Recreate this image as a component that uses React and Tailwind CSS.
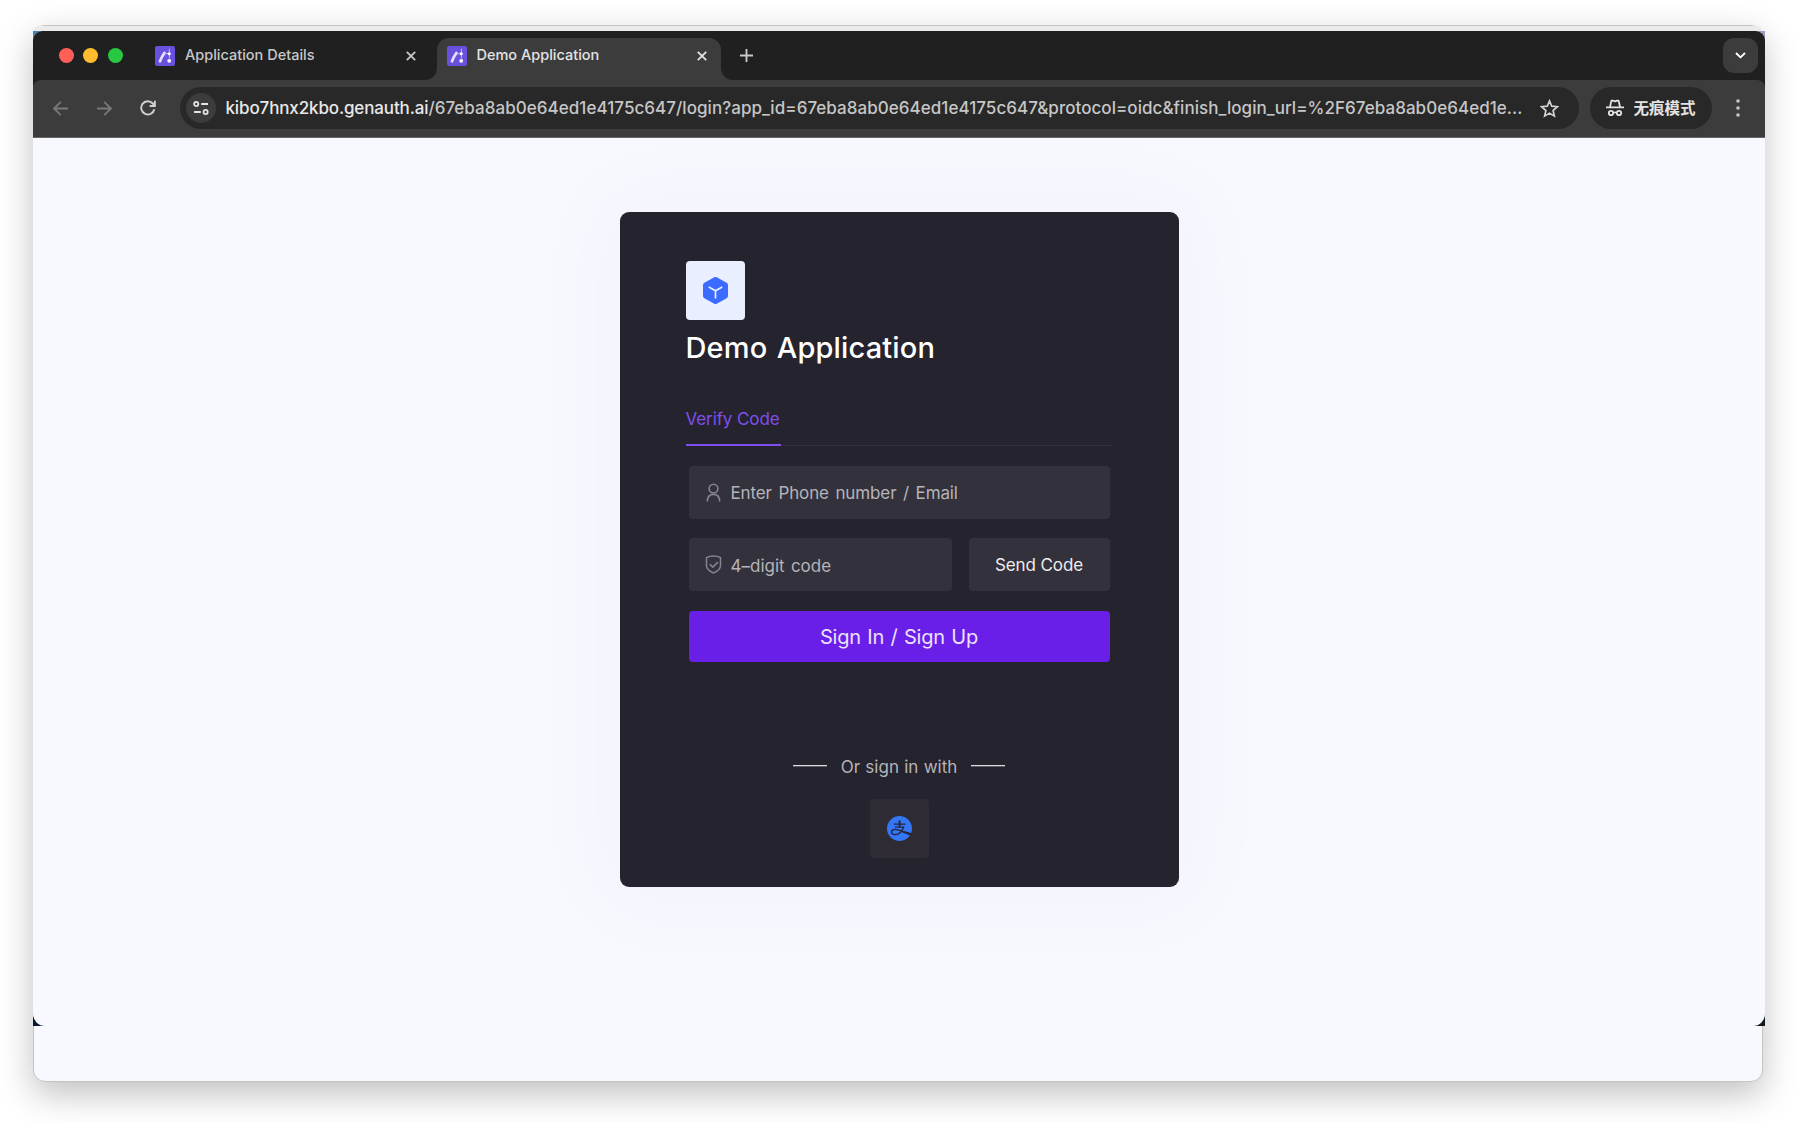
const line = { fill: "none", stroke: "currentColor", strokeLinecap: "round", strokeLinejoin: "round" };

function Favicon() {
  return (
    <svg className="size-5 shrink-0" viewBox="0 0 20 20">
      <rect width="20" height="20" rx="2" fill="#6a50dc" />
      <path d="M5 15.2Q6.5 11 9.4 7" stroke="#e6dfff" strokeWidth="2.8" strokeLinecap="round" fill="none" />
      <path d="M14.4 3v9M10.5 7.6h5" stroke="#b9abf5" strokeWidth="1.1" strokeLinecap="round" />
      <circle cx="14.2" cy="7.7" r="1.5" fill="#fff" />
      <circle cx="14.2" cy="14.8" r="1.9" fill="#fff" />
    </svg>
  );
}

function Close({ className }) {
  return (
    <svg className={className} viewBox="0 0 10 10" {...line} strokeWidth="1.8" strokeLinecap="butt">
      <path d="M.8.8l8.4 8.4M9.2.8.8 9.2" />
    </svg>
  );
}

function TabStrip() {
  return (
    <div className="flex h-[49px] bg-[#202020]">
      <div className="flex h-[49px] w-[121px] shrink-0 items-center gap-[9.5px] pl-[25.5px]">
        <span className="size-[15px] rounded-full bg-[#ff5f57]" />
        <span className="size-[15px] rounded-full bg-[#febc2e]" />
        <span className="size-[15px] rounded-full bg-[#28c840]" />
      </div>
      <div className="flex h-[49px] w-[283px] shrink-0 items-center pl-[1px] text-[#c8c8c8]">
        <Favicon />
        <span className="ml-[10px] -mt-px text-[14.5px] font-medium leading-5">Application Details</span>
        <Close className="ml-auto mr-[21px] size-[10px]" />
      </div>
      <div className="relative mt-[7px] flex h-[42px] w-[284px] shrink-0 items-center rounded-t-[12px] bg-[#3c3c3c] pb-[7px] pl-[9.5px] text-[#e3e3e3]">
        <svg className="absolute bottom-0 -left-[12px] size-3" viewBox="0 0 12 12"><path d="M12 0v12H0A12 12 0 0 0 12 0" fill="#3c3c3c" /></svg>
        <svg className="absolute bottom-0 -right-[12px] size-3" viewBox="0 0 12 12"><path d="M0 0v12h12A12 12 0 0 1 0 0" fill="#3c3c3c" /></svg>
        <Favicon />
        <span className="ml-[10px] -mt-px text-[14.5px] font-medium leading-5">Demo Application</span>
        <Close className="ml-auto mr-[14px] size-[10px]" />
      </div>
      <svg className="ml-[19px] mt-[18px] size-[13px] text-[#c8c8c8]" viewBox="0 0 13 13" {...line} strokeWidth="1.9" strokeLinecap="butt">
        <path d="M6.5 0v13M0 6.5h13" />
      </svg>
      <div className="ml-auto mr-[7px] mt-[7px] flex size-[35px] items-center justify-center rounded-[11px] bg-[#3c3c3c] text-white">
        <svg className="h-[7px] w-[11px]" viewBox="0 0 11 7" {...line} strokeWidth="1.9" strokeLinecap="butt">
          <path d="M1 1l4.5 4.4L10 1" />
        </svg>
      </div>
    </div>
  );
}

function Arrow({ className }) {
  return (
    <svg className={className} viewBox="0 0 15 15" {...line} strokeWidth="1.8" strokeLinecap="butt" strokeLinejoin="miter">
      <path d="M15 7.5H1.2M7.8.8 1.1 7.5l6.7 6.7" />
    </svg>
  );
}

function Toolbar() {
  return (
    <div className="bg-[#202020]">
      <div className="flex h-[58px] items-center rounded-t-[8px] border-b border-[#666] bg-[#3c3c3c] pb-[1px] pl-5">
        <Arrow className="size-[15px] shrink-0 text-[#787878]" />
        <Arrow className="ml-[29px] size-[15px] shrink-0 rotate-180 text-[#787878]" />
        <svg className="ml-[28px] size-4 shrink-0 text-[#d0d0d0]" viewBox="0 0 16 16" {...line} strokeWidth="1.9" strokeLinecap="butt" strokeLinejoin="miter">
          <path d="M14.3 9.2A6.6 6.6 0 1 1 12.8 3.5L14.6 5.6M14.9.8v5.2H9.6" />
        </svg>
        <div className="ml-[24px] flex h-[42px] w-[1398.5px] shrink-0 items-center rounded-full bg-[#282828] pl-[6px]">
          <div className="flex size-[30px] items-center justify-center rounded-full bg-[#3c3c3c] text-[#e3e3e3]">
            <svg className="h-[14px] w-4" viewBox="0 0 16 14" {...line} strokeWidth="1.8" strokeLinecap="butt">
              <circle cx="3.2" cy="3" r="2.1" /><path d="M8.2 3H15" />
              <circle cx="12.6" cy="11" r="2.1" /><path d="M1 11h6.8" />
            </svg>
          </div>
          <div className="ml-[9.5px] whitespace-nowrap text-[17px] font-medium leading-6 text-[#c6c6c6]">
            <span className="tracking-[-0.13px] text-[#e8e8e8]">kibo7hnx2kbo.genauth.ai</span>
            <span className="tracking-[0.043px]">/67eba8ab0e64ed1e4175c647/login?app_id=67eba8ab0e64ed1e4175c647&amp;protocol=oidc&amp;finish_login_url=%2F67eba8ab0e64ed1e...</span>
          </div>
          <svg className="ml-auto mr-[19.5px] h-[19px] w-[19px] text-[#d0d0d0]" viewBox="0 0 18 18" {...line} strokeWidth="1.6" strokeLinejoin="miter">
            <path d="M9 1.8l2.1 5 5.4.5-4.1 3.6 1.2 5.3L9 13.4l-4.6 2.8 1.2-5.3-4.1-3.6 5.4-.5z" />
          </svg>
        </div>
        <div className="ml-[11px] flex h-[42px] w-[122px] shrink-0 items-center rounded-full bg-[#282828] pl-[16px] text-[#e3e3e3]">
          <svg className="h-[18px] w-[18px]" viewBox="0 0 18 18" {...line} strokeWidth="1.8" strokeLinecap="butt">
            <path d="M0 8.3h18M4 8l1.4-6.4h1.4L9 2.4l2.2-.8h1.4L14 8" />
            <circle cx="5" cy="14" r="2.2" /><circle cx="13" cy="14" r="2.2" /><path d="M7.2 13.8q1.8-1 3.6 0" />
          </svg>
          <span className="ml-[10px] mt-px whitespace-nowrap text-[15.5px] font-bold leading-6">无痕模式</span>
        </div>
        <svg className="ml-[24.5px] h-[18px] w-1 shrink-0 text-[#c8c8c8]" viewBox="0 0 4 18" fill="currentColor">
          <circle cx="2" cy="2" r="1.8" /><circle cx="2" cy="9" r="1.8" /><circle cx="2" cy="16" r="1.8" />
        </svg>
      </div>
    </div>
  );
}

function LoginCard() {
  return (
    <div className="ml-[587px] mt-[74px] flex h-[675px] w-[559px] flex-col rounded-[9px] bg-[#25232d] pt-[49px] shadow-[0_0_90px_24px_rgba(50,50,110,0.022)]">
      <div className="ml-[66px] flex size-[59px] items-center justify-center rounded-[4px] bg-[#e9efff]">
        <svg className="h-[27px] w-[25px]" viewBox="0 0 25 27">
          <path d="M12.5 2.5 22.5 8V19L12.5 24.5 2.5 19V8z" fill="#3c6bff" stroke="#3c6bff" strokeWidth="5" strokeLinejoin="round" />
          <path d="M5.8 10.1 12.5 13.8l6.7-3.7M12.5 13.8v7.8" fill="none" stroke="#e9efff" strokeWidth="1.7" />
        </svg>
      </div>
      <h1 className="ml-[65.5px] mt-[8px] h-10 whitespace-nowrap text-[29px] font-medium leading-10 tracking-[0.15px] text-white [word-spacing:1.5px]">Demo Application</h1>
      <div className="mx-[66px] mt-[34px] flex h-[44px] border-b border-[#34323c]">
        <div className="h-[44px] w-[95px] whitespace-nowrap border-b-2 border-[#804eed] pt-[5px] text-[17px] leading-6 tracking-[-0.1px] text-[#804eed]">
          <span className="-ml-[0.5px]">Verify Code</span>
        </div>
      </div>
      <div className="ml-[69px] mt-[20px] flex h-[53px] w-[421px] items-center rounded-[4px] bg-[#33313b] pl-4">
        <svg className="h-[19px] w-[17px] text-[#85838f]" viewBox="0 0 17 19" {...line} strokeWidth="1.6">
          <circle cx="8.5" cy="5.6" r="4.4" /><path d="M2.3 18c.3-4.3 2.8-6.6 6.2-6.6s5.9 2.3 6.2 6.6" />
        </svg>
        <span className="ml-[8.5px] mt-px whitespace-nowrap text-[17px] leading-6 tracking-[-0.12px] text-[#b5b4b9] [word-spacing:1.9px]">Enter Phone number / Email</span>
      </div>
      <div className="ml-[69px] mt-[19px] flex h-[53px] w-[421px] justify-between">
        <div className="flex w-[263px] items-center rounded-[4px] bg-[#33313b] pl-4">
          <svg className="h-[19px] w-[17px] text-[#85838f]" viewBox="0 0 17 19" {...line} strokeWidth="1.5">
            <path d="M8.5 1C6.2 1 3.4 1.5 1.5 2.6v7.9c0 3.5 3.3 5.9 7 7.5 3.7-1.6 7-4 7-7.5V2.6C13.6 1.5 10.8 1 8.5 1zM5.2 9.6l2.6 2.5 4.8-4.7" />
          </svg>
          <span className="ml-[8.5px] mt-[2px] whitespace-nowrap text-[17px] leading-6 text-[#b5b4b9] [word-spacing:1.5px]">4–digit code</span>
        </div>
        <div className="flex w-[141px] items-center justify-center rounded-[4px] bg-[#33313b] pr-px pt-px text-[17px] leading-6 tracking-[-0.1px] text-[#ececee]">Send Code</div>
      </div>
      <div className="ml-[69px] mt-[20px] flex h-[51px] w-[421px] items-center justify-center rounded-[4px] bg-[#6a1fe8] pr-px text-[20px] tracking-[-0.2px] text-[#ece2fd] [word-spacing:1px]">Sign In / Sign Up</div>
      <div className="mt-[92px] flex h-6 items-center justify-center gap-[13.5px] pr-px text-[17px] leading-6 text-[#b5b4b9]">
        <span className="-mt-px h-px w-[34px] bg-[#dddce0] shadow-[0_1px_0_#5c5a63]" />
        <span className="mt-[2px] whitespace-nowrap [word-spacing:0.5px]">Or sign in with</span>
        <span className="-mt-px h-px w-[34px] bg-[#dddce0] shadow-[0_1px_0_#5c5a63]" />
      </div>
      <div className="ml-[250px] mt-[21px] flex size-[59px] items-center justify-center rounded-[4px] bg-[#2e2b35]">
        <svg className="size-[25px]" viewBox="0 0 25 25">
          <circle cx="12.5" cy="12.5" r="12.5" fill="#3377f6" />
          <g fill="none" stroke="#25263a" strokeWidth="1.4">
            <path d="M12.6 4.5v6.3" strokeWidth="2" />
            <path d="M6.8 8.1h11.8M8 11.1h9.2" />
            <path d="M16.6 11c-1.3 4-4.4 7.6-8.6 7.6-2.6 0-3.7-1.2-3.5-2.8.2-1.500 1.600-2.400 3.500-2.400 3 0 8.500 2.400 16.200 4.700" />
          </g>
          <path d="M14.600 14.600c2.600 1 6 2 9.800 2.600l-1.100 2.200c-3.200-.9-6.300-2.200-9.400-3.600z" fill="#25263a" />
        </svg>
      </div>
    </div>
  );
}

export default function App() {
  return (
    <div className="h-[1123px] w-[1796px] overflow-hidden bg-white pl-[33px] pt-[25px] font-['Inter','Noto_Sans_CJK_SC',sans-serif]">
      <div className="h-[1057px] w-[1730px] rounded-[12px] border border-[#c4c4c6] bg-[#f8f9ff] shadow-[0_12px_34px_rgba(0,0,0,0.25)]">
        <div className="h-[5px] rounded-t-[11px] bg-[#ebebeb]" />
        <div className="relative -ml-px h-[995px] w-[1732px]">
          <div className="absolute left-0 top-0 size-3 bg-[#3f83bd]" />
          <div className="absolute right-0 top-0 size-3 bg-[#9a9ac8]" />
          <div className="absolute bottom-0 left-0 size-[13px] bg-[#06162c]" />
          <div className="absolute bottom-0 right-0 size-[13px] bg-[#11191a]" />
          <div className="relative h-[995px] overflow-hidden rounded-[12px] rounded-t-[9px] bg-[#f8f9ff]">
            <TabStrip />
            <Toolbar />
            <LoginCard />
          </div>
        </div>
      </div>
    </div>
  );
}
